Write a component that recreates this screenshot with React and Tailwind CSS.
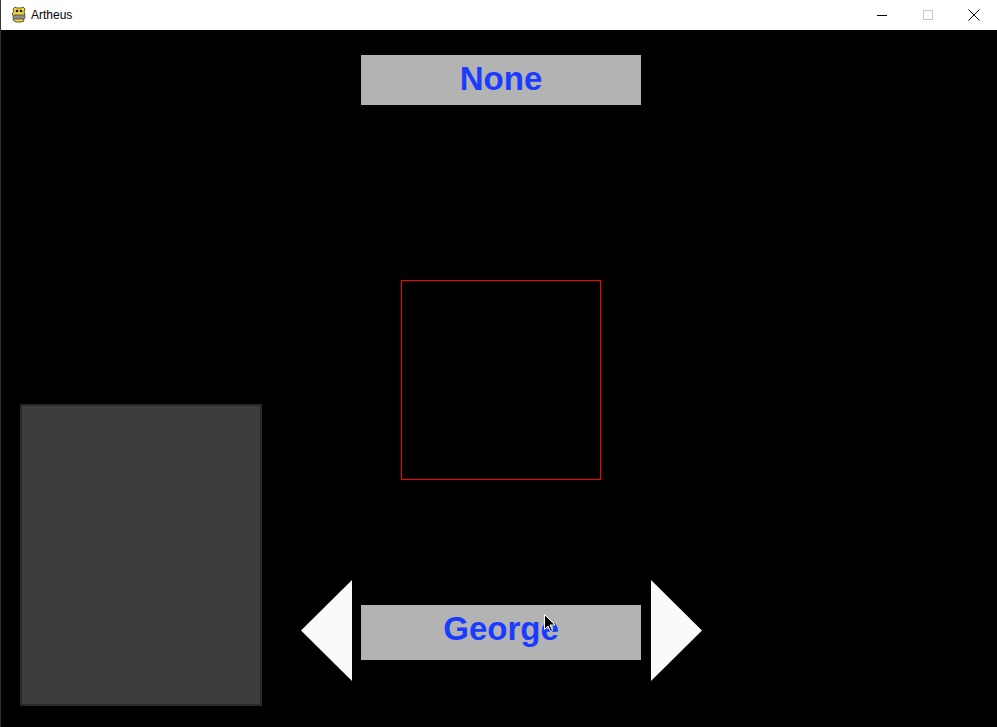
import React from 'react'

function PygameIcon() {
  return (
    <svg width="16" height="17" viewBox="0 0 16 17">
      <path d="M4 1 L6 2 L10 2 L12 1 L14 3 L13 6 L14 9 L12 12 L13 15 L10 16 L5 16 L2 14 L3 11 L1 8 L3 5 L2 3 Z" fill="#f2d43a" stroke="#5a5a3a" strokeWidth="1" />
      <rect x="2" y="9" width="12" height="4" rx="1.5" fill="#8c8c8c" stroke="#444" strokeWidth="0.8" />
      <circle cx="6" cy="5" r="1.3" fill="#222" />
      <circle cx="10" cy="5" r="1.3" fill="#222" />
    </svg>
  )
}

function TitleBar() {
  return (
    <div className="h-[30px] bg-white flex items-center border-l border-[#3a3a3a]">
      <div className="ml-[10px] mt-[-2px]">
        <PygameIcon />
      </div>
      <span className="ml-[4px] text-[12px] text-black font-['Liberation_Sans',Arial,sans-serif] mt-[-1px]">
        Artheus
      </span>
      <div className="ml-auto flex items-center h-full">
        <div className="w-[46px] h-full flex items-center justify-center">
          <div className="w-[10px] h-px bg-black" />
        </div>
        <div className="w-[46px] h-full flex items-center justify-center">
          <div className="w-[10px] h-[10px] border border-[#c8c8c8]" />
        </div>
        <div className="w-[46px] h-full flex items-center justify-center">
          <svg width="12" height="12" viewBox="0 0 12 12">
            <path d="M0.5 0.5 L11.5 11.5 M11.5 0.5 L0.5 11.5" stroke="#000" strokeWidth="1" />
          </svg>
        </div>
      </div>
    </div>
  )
}

function Arrow({ dir }) {
  const pts = dir === 'left' ? '51,0 51,101 0,50.5' : '0,0 0,101 51,50.5'
  return (
    <svg width="51" height="101" viewBox="0 0 51 101" className="shrink-0">
      <polygon points={pts} fill="#fafafa" />
    </svg>
  )
}

function Label({ text, h }) {
  return (
    <div
      className={`w-[280px] ${h} bg-[#b3b3b3] flex justify-center pt-[7px] shrink-0`}
    >
      <span className="text-[33px] leading-none font-bold text-[#1a3cff] font-['Liberation_Sans',Arial,sans-serif]">
        {text}
      </span>
    </div>
  )
}

function Cursor() {
  return (
    <svg width="12" height="19" viewBox="0 0 12 19" className="absolute left-[543px] top-[584px]">
      <path d="M0.5 0.5 L0.5 15.5 L4 12 L6.5 17.5 L8.5 16.5 L6 11 L11 11 Z" fill="#000" stroke="#fff" strokeWidth="1" />
    </svg>
  )
}

export default function App() {
  return (
    <div className="w-[997px] h-[727px] bg-black overflow-hidden">
      <TitleBar />
      <div className="relative h-[697px] bg-black border-l border-[#2e2e2e]">
        <div className="pt-[25px] pl-[360px]">
          <Label text="None" h="h-[50px]" />
        </div>
        <div className="flex items-start">
          <div className="ml-[19px] mt-[299px] w-[242px] h-[302px] border-2 border-[#282828] bg-[#3d3d3d] shrink-0" />
          <div className="ml-[39px] flex flex-col">
            <div className="ml-[100px] mt-[175px] w-[200px] h-[200px] border border-[#ff0000]" />
            <div className="mt-[100px] flex items-start">
              <Arrow dir="left" />
              <div className="ml-[9px] mt-[25px]">
                <Label text="George" h="h-[55px]" />
              </div>
              <div className="ml-[10px]">
                <Arrow dir="right" />
              </div>
            </div>
          </div>
        </div>
        <Cursor />
      </div>
    </div>
  )
}
